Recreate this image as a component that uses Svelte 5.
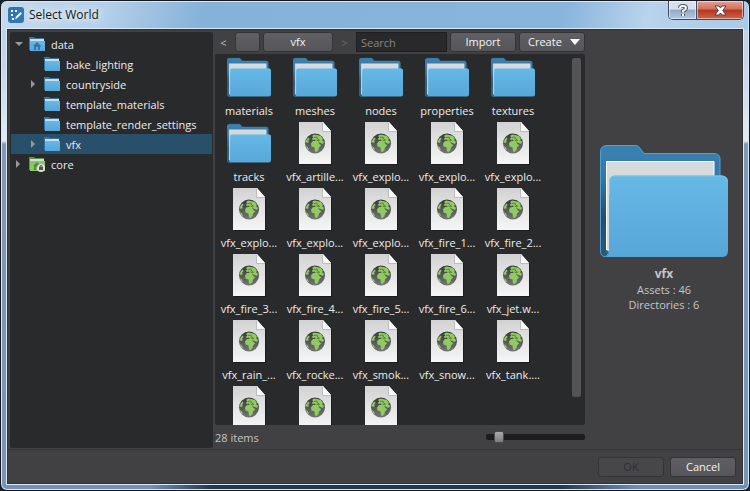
<script lang="ts">
  type AssetKind = 'folder' | 'world';
  type TreeNode = {
    label: string;
    level: number;
    arrow: 'open' | 'closed' | null;
    icon: 'home' | 'folder' | 'core';
  };

  const tree: TreeNode[] = [
    { label: 'data', level: 0, arrow: 'open', icon: 'home' },
    { label: 'bake_lighting', level: 1, arrow: null, icon: 'folder' },
    { label: 'countryside', level: 1, arrow: 'closed', icon: 'folder' },
    { label: 'template_materials', level: 1, arrow: null, icon: 'folder' },
    { label: 'template_render_settings', level: 1, arrow: null, icon: 'folder' },
    { label: 'vfx', level: 1, arrow: 'closed', icon: 'folder' },
    { label: 'core', level: 0, arrow: 'closed', icon: 'core' },
  ];

  const folders = ['materials', 'meshes', 'nodes', 'properties', 'textures', 'tracks'];
  const worlds = [
    'vfx_artille...', 'vfx_explo...', 'vfx_explo...', 'vfx_explo...',
    'vfx_explo...', 'vfx_explo...', 'vfx_explo...', 'vfx_fire_1...', 'vfx_fire_2...',
    'vfx_fire_3...', 'vfx_fire_4...', 'vfx_fire_5...', 'vfx_fire_6...', 'vfx_jet.w...',
    'vfx_rain_...', 'vfx_rocke...', 'vfx_smok...', 'vfx_snow...', 'vfx_tank....',
    '', '', '',
  ];
  const items: { label: string; kind: AssetKind }[] = [
    ...folders.map((label) => ({ label, kind: 'folder' as AssetKind })),
    ...worlds.map((label) => ({ label, kind: 'world' as AssetKind })),
  ];

  let selected = $state('vfx');
  let search = $state('');
  let zoom = $state(9);
</script>

{#snippet folderArt()}
  <path d="M.5 7Q.5 .5 7 .5H36Q38 .5 39 2L44 8.500H114Q120 8.500 120 14V100H9Q9 111.500 5 111.500Q.5 111.500 .5 106Z" fill="url(#folder-back)" stroke="#4ba3d5" />
  <path d="M6.500 16.500H114V105H6.500Z" fill="#d6dada" stroke="#fff" />
  <path d="M9 37Q9 30.500 15 30.500H122Q128 30.500 128 37V106Q128 112 122 112H5Q9 111 9 105Z" fill="url(#folder-front)" />
  <path d="M9.500 50V37Q9.500 31 16 31H121Q127 31 127.500 37" fill="none" stroke="#79c9ed" />
{/snippet}

{#snippet smallFolder(green: boolean)}
  <path d="M0 0H5L6 1H15V13H0Z" fill={green ? '#5d9440' : '#2d78a8'} />
  <path d="M1 2H15V6H1Z" fill="#d5dcdd" />
  <path d="M1 4H16V14H1Z" fill={green ? '#8bc765' : 'url(#folder-front)'} />
{/snippet}

<svg class="defs" width="0" height="0" aria-hidden="true">
  <defs>
    <linearGradient id="folder-back" x2="0" y2="1">
      <stop offset="0" stop-color="#3b82b3" />
      <stop offset=".3" stop-color="#3377a5" />
      <stop offset=".65" stop-color="#234f6b" />
      <stop offset="1" stop-color="#2a5a79" />
    </linearGradient>
    <linearGradient id="folder-front" x2="0" y2="1">
      <stop offset="0" stop-color="#66b8e5" />
      <stop offset="1" stop-color="#57a7da" />
    </linearGradient>
    <linearGradient id="page" x2="0" y2="1">
      <stop offset="0" stop-color="#d2d2d2" />
      <stop offset="1" stop-color="#f6f6f6" />
    </linearGradient>
    <linearGradient id="ocean" x2="0" y2="1">
      <stop offset="0" stop-color="#363839" />
      <stop offset="1" stop-color="#747676" />
    </linearGradient>
  </defs>
</svg>

<main class="window">
  <header class="titlebar">
    <svg class="logo" width="16" height="16" viewBox="0 0 16 16" aria-hidden="true">
      <rect width="16" height="16" rx="3" fill="#2f76b4" />
      <rect x="3" y="3" width="2" height="2" fill="#fff" />
      <rect x="7" y="3" width="2" height="2" fill="#fff" />
      <rect x="3" y="7" width="2" height="2" fill="#fff" />
      <rect x="4" y="11" width="2" height="2" fill="#fff" />
      <path d="M7 12.500L8 9.500L12.500 5L14 6.500L9.500 11Z" fill="#e7f3fb" />
    </svg>
    <h1>Select World</h1>
    <div class="caption-buttons">
      <button type="button" class="help" aria-label="Help">
        <svg width="10" height="13" viewBox="0 0 10 13">
          <path d="M2 4Q2 2 5 2T8 4Q8 5.500 5 7V8.500M5 10V12" fill="none" stroke="#4d5969" stroke-width="4" />
          <path d="M2 4Q2 2 5 2T8 4Q8 5.500 5 7V8.500M5 10V12" fill="none" stroke="#fff" stroke-width="2" />
        </svg>
      </button>
      <button type="button" class="close" aria-label="Close">
        <svg width="13" height="11" viewBox="0 0 13 11">
          <path d="M1 1H5L6.500 3L8 1H12L8.700 5.500L12 10H8L6.500 8L5 10H1L4.300 5.500Z" fill="#fff" stroke="#5a4048" />
        </svg>
      </button>
    </div>
  </header>

  <div class="client">
    <div class="panes">
      <nav class="tree" aria-label="Directories">
        {#each tree as node (node.label)}
          <button
            type="button"
            class="node"
            class:child={node.level === 1}
            class:selected={selected === node.label}
            onclick={() => (selected = node.label)}
          >
            <svg class="arrow" width="8" height="8" viewBox="0 0 8 8" aria-hidden="true">
              {#if node.arrow === 'open'}
                <path d="M0 2H8L4 6Z" fill="#999" />
              {:else if node.arrow === 'closed'}
                <path d="M1 0L5 4L1 8Z" fill="#999" />
              {/if}
            </svg>
            <svg width="18" height="16" viewBox="0 0 18 16" aria-hidden="true">
              <g transform="translate(0 1)">
                {@render smallFolder(node.icon === 'core')}
                {#if node.icon !== 'folder'}
                  <path d="M4 9L8 5L12 9L11 10V13H9V10H7V13H5V9Z" fill={node.icon === 'core' ? '#558c3c' : '#3278a6'} />
                {/if}
                {#if node.icon === 'core'}
                  <circle cx="12" cy="11" r="4" fill="#ddd" />
                  <rect x="10" y="10" width="4" height="3" fill="#555" />
                  <path d="M11 10V9Q12 8 13 9V10" fill="none" stroke="#555" />
                {/if}
              </g>
            </svg>
            <span>{node.label}</span>
          </button>
        {/each}
      </nav>

      <section class="browser">
        <div class="toolbar">
          <button type="button" class="step" aria-label="Back">&lt;</button>
          <button type="button" class="btn root" aria-label="Root"></button>
          <button type="button" class="btn crumb">vfx</button>
          <button type="button" class="step" disabled aria-label="Forward">&gt;</button>
          <input class="search" type="text" placeholder="Search" aria-label="Search" bind:value={search} />
          <button type="button" class="btn action">Import</button>
          <button type="button" class="btn action create">
            Create
            <svg width="10" height="6" viewBox="0 0 10 6" aria-hidden="true"><path d="M0 0H10L5 6Z" fill="#fff" /></svg>
          </button>
        </div>

        <div class="assets">
          <ul class="grid">
            {#each items as item, i (i)}
              <li>
                {#if item.kind === 'folder'}
                  <svg width="44" height="44" viewBox="0 0 128 128" aria-hidden="true">
                    <g transform="translate(0 6)">{@render folderArt()}</g>
                  </svg>
                {:else}
                  <svg width="36" height="44" viewBox="0 0 36 44" aria-hidden="true">
                    <path d="M3 1H28L35 10V43H3Z" fill="#1b1c1d" />
                    <path d="M2 0H26L34 9V42H2Z" fill="url(#page)" />
                    <path d="M26 0V9H34Z" fill="#f8f8f8" />
                    <path d="M25.500 1V9.500H34" fill="none" stroke="#bcbcbc" />
                    <circle cx="18" cy="21.500" r="10" fill="url(#ocean)" />
                    <path d="M15 14L17 12.500L20 13L24 14L26 17L25 18L27 20L26 22L23.500 21L21 20L23 22.500L24.500 23L22 25.500L21.500 28L19.500 30L18 29.500L17.500 25.500L14.500 24.500L14 21.500L16 19L18.500 19L18 17.500L15.500 18L15 16.500L16.500 15.500ZM8.500 20L10 17L12 15.500L12.500 17L11 19L12 20L10 21ZM9 24L11 25.500L12 28.500L10 27Z" fill="#91ca60" />
                    <path d="M17 15.500L20 15L20.500 17L22.500 18L22 19L19.500 18" fill="none" stroke="#49643b" stroke-width=".7" />
                  </svg>
                {/if}
                <span>{item.label}</span>
              </li>
            {/each}
          </ul>
          <div class="scroll"><div class="scroll-thumb"></div></div>
        </div>

        <div class="status">
          <span>28 items</span>
          <input type="range" min="0" max="100" aria-label="Icon size" bind:value={zoom} />
        </div>
      </section>

      <aside class="preview">
        <svg width="128" height="112" viewBox="0 0 128 112" aria-hidden="true">{@render folderArt()}</svg>
        <h2>vfx</h2>
        <p>Assets : 46</p>
        <p>Directories : 6</p>
      </aside>
    </div>

    <footer>
      <button type="button" class="btn" disabled>OK</button>
      <button type="button" class="btn">Cancel</button>
    </footer>
  </div>
</main>

<style>
  :global(body) {
    background: #1a222c;
  }

  .defs {
    position: absolute;
  }

  .window {
    box-sizing: border-box;
    height: 100vh;
    display: flex;
    flex-direction: column;
    padding: 0 5px 5px;
    border: 1px solid #15191f;
    border-radius: 7px;
    box-shadow: inset 0 0 0 1px #d5e8f7;
    background:
      linear-gradient(90deg, #7591b3 0 20%, #26384c 28% 75%, #718db0 85%) bottom / 100% 5px no-repeat,
      linear-gradient(100deg, #c5d9ed, #b4d0e9 14%, #86b2d9 27%, #89b4dc 75%, #b8d3eb 86%, #a9c9e6) top / 100% 29px no-repeat,
      linear-gradient(#b9d0e7 0, #c3d5e7 60px, #e5eaf0 140px, #8299b5 143px, #7893b5);
    font-family: 'Open Sans', 'Noto Sans', sans-serif;
    font-size: 11px;
    color: #ececec;
  }

  button,
  input {
    font: inherit;
    color: inherit;
  }

  button {
    padding: 0;
    border: none;
    background: none;
  }

  .titlebar {
    flex: none;
    display: flex;
    align-items: center;
    height: 27px;
    padding-left: 2px;
    color: #101820;
  }

  h1 {
    margin: 0 auto 0 5px;
    font-size: 12px;
    font-weight: 400;
    text-shadow: 0 0 7px #fff, 0 0 10px #fff;
  }

  .caption-buttons {
    display: flex;
    align-self: flex-start;
    overflow: hidden;
    border: 1px solid #3b4c63;
    border-top: none;
    border-radius: 0 0 5px 5px;
  }

  .caption-buttons button {
    display: flex;
    align-items: center;
    justify-content: center;
    width: 27px;
    height: 18px;
    box-shadow: inset 0 0 0 1px #ffffff80;
    background: linear-gradient(#d5e1ed 0 45%, #92aac5 50%, #b1c9df);
  }

  .caption-buttons .close {
    width: 47px;
    border-left: 1px solid #3b4c63;
    background: linear-gradient(#e3a294, #d0705c 45%, #b53421 50%, #cb6647);
  }

  .client {
    flex: 1;
    min-height: 0;
    display: flex;
    flex-direction: column;
    border: 1px solid #d9eaf8;
    box-shadow: inset 0 0 0 1px #303236;
    background: #414144;
  }

  .panes {
    flex: 1;
    min-height: 0;
    display: flex;
    padding: 3px 0 1px 3px;
  }

  .tree {
    box-sizing: border-box;
    width: 203px;
    padding: 2px 1px;
    border-radius: 2px;
    background: #292a2b;
  }

  .node {
    display: flex;
    align-items: center;
    width: 100%;
    height: 20px;
    padding-left: 4px;
    white-space: nowrap;
  }

  .node.child {
    padding-left: 19px;
  }

  .node.selected {
    background: #28506b;
  }

  .arrow {
    margin-right: 6px;
  }

  .node span {
    margin-left: 4px;
  }

  .browser {
    flex: 1;
    min-width: 0;
    display: flex;
    flex-direction: column;
    margin-left: 2px;
  }

  .toolbar {
    display: flex;
    align-items: center;
    gap: 3px;
    height: 20px;
    margin-bottom: 2px;
  }

  .step {
    width: 17px;
    color: #c0c0c0;
  }

  .step:disabled {
    color: #68686b;
  }

  .btn {
    box-sizing: border-box;
    height: 20px;
    border: 1px solid #343437;
    border-radius: 3px;
    background: linear-gradient(#606064, #56565a);
    color: #f4f4f4;
    line-height: 18px;
  }

  .btn:disabled {
    background: #47474a;
    color: #303032;
  }

  .root {
    width: 25px;
  }

  .crumb {
    width: 70px;
  }

  .search {
    box-sizing: border-box;
    flex: 1;
    min-width: 0;
    height: 20px;
    padding: 0 4px;
    border: 1px solid #1e1f20;
    background: #29292b;
  }

  .search::placeholder {
    color: #858588;
  }

  .action {
    width: 66px;
  }

  .create {
    display: flex;
    align-items: center;
    justify-content: space-between;
    padding: 0 4px 0 8px;
  }

  .assets {
    flex: 1;
    min-height: 0;
    display: flex;
    border-radius: 2px;
    overflow: hidden;
    background: #292a2b;
  }

  .grid {
    flex: 1;
    display: grid;
    grid-template-columns: repeat(auto-fill, 66px);
    grid-auto-rows: 66px;
    margin: 0;
    padding: 2px 0 0 1px;
    list-style: none;
  }

  .grid li {
    display: flex;
    flex-direction: column;
    align-items: center;
  }

  .grid span {
    margin-top: 2px;
    line-height: 18px;
    white-space: nowrap;
  }

  .scroll {
    width: 9px;
    padding: 4px 4px 2px 0;
  }

  .scroll-thumb {
    height: 93%;
    border-radius: 2px;
    background: #545457;
  }

  .status {
    display: flex;
    align-items: center;
    justify-content: space-between;
    height: 22px;
    padding-top: 1px;
    color: #c4c4c4;
  }

  input[type='range'] {
    appearance: none;
    width: 99px;
    height: 14px;
    margin: 0;
    background: transparent;
  }

  input[type='range']::-webkit-slider-runnable-track {
    height: 6px;
    border-radius: 2px;
    background: #1d1d1d;
  }

  input[type='range']::-webkit-slider-thumb {
    appearance: none;
    width: 10px;
    height: 12px;
    margin-top: -3px;
    border: 1px solid #4a4a4a;
    border-radius: 2px;
    background: linear-gradient(#aaa, #7d7d7d);
  }

  .preview {
    width: 158px;
    display: flex;
    flex-direction: column;
    align-items: center;
    padding-top: 113px;
    box-sizing: border-box;
    color: #c6c6c6;
    line-height: 15px;
  }

  .preview h2 {
    margin: 9px 0 0;
    font-size: 12px;
    line-height: 16px;
  }

  .preview p {
    margin: 0;
  }

  footer {
    display: flex;
    justify-content: flex-end;
    gap: 6px;
    padding: 7px 7px;
    border-top: 1px solid #353538;
  }

  footer .btn {
    width: 66px;
  }
</style>
